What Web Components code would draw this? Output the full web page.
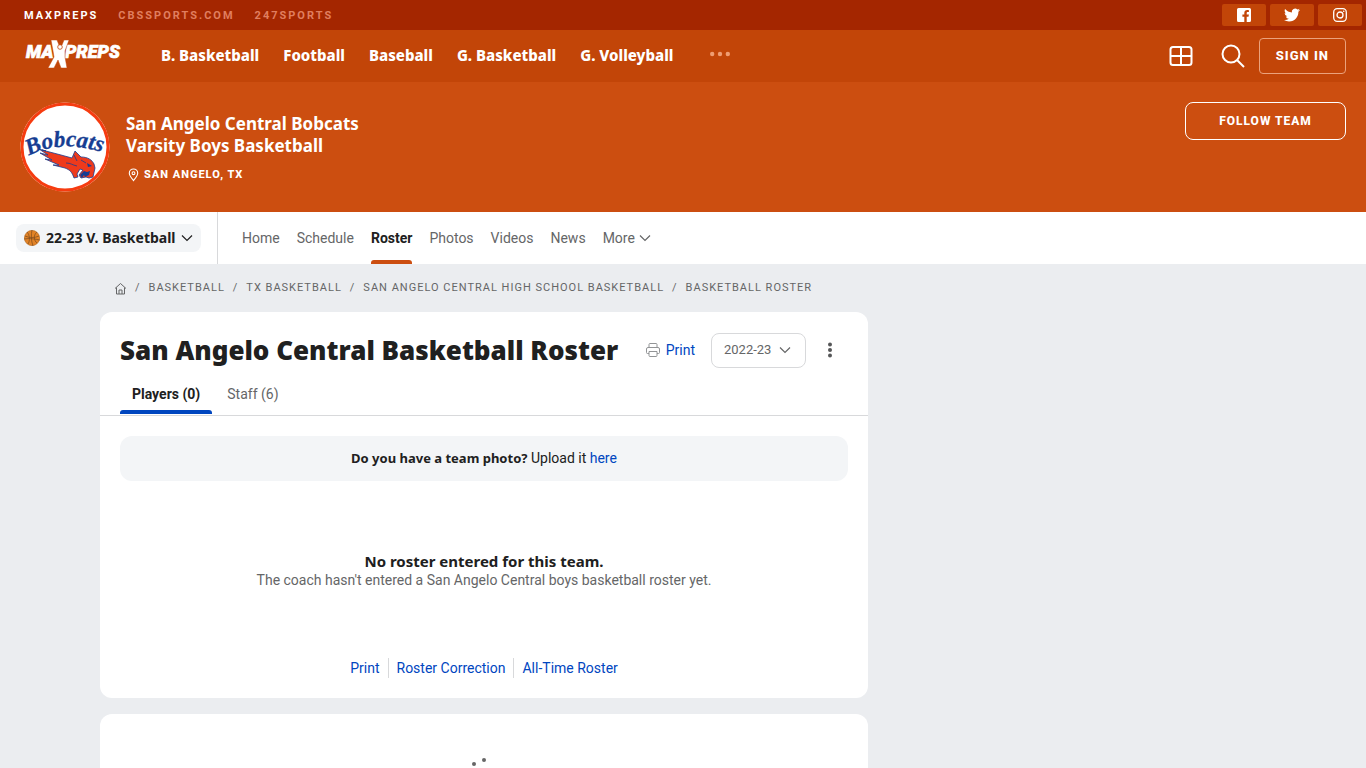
<!DOCTYPE html>
<html lang="en">
<head>
<meta charset="utf-8">
<meta name="viewport" content="width=device-width, initial-scale=1">
<title>San Angelo Central Basketball Roster</title>
<style>
  :root {
    --brand-dark: #a42600;
    --brand-nav: #c24508;
    --brand: #cc4e10;
    --page-bg: #ebedf0;
    --soft-bg: #f3f5f7;
    --line: #d8d9db;
    --text: #202020;
    --muted: #656667;
    --link: #0046bf;
    --heading-font: "Noto Sans", Roboto, sans-serif;
  }
  body {
    margin: 0;
    background: var(--page-bg);
    color: var(--text);
    font: 14px/20px Roboto, "Noto Sans", sans-serif;
  }
  .layout {
    display: grid;
    grid-template-columns: minmax(0, 768px) minmax(0, 300px);
    justify-content: space-between;
    max-width: 1166px;
    margin: 0 auto;
  }
  main {
    display: grid;
    gap: 16px;
  }
</style>
</head>
<body>
<network-bar></network-bar>
<site-nav></site-nav>
<team-header location="San Angelo, TX">
  <span slot="name">San Angelo Central Bobcats</span>
  <span slot="squad">Varsity Boys Basketball</span>
</team-header>
<team-tabs season="22-23 V. Basketball" items="Home, Schedule, Roster, Photos, Videos, News" active="Roster"></team-tabs>
<div class="layout">
  <div>
    <bread-crumbs items="Basketball, TX Basketball, San Angelo Central High School Basketball, Basketball Roster"></bread-crumbs>
    <main>
      <page-card>
        <roster-header year="2022-23">San Angelo Central Basketball Roster</roster-header>
        <roster-empty>
          <span slot="title">No roster entered for this team.</span>
          <span slot="text">The coach hasn't entered a San Angelo Central boys basketball roster yet.</span>
        </roster-empty>
      </page-card>
      <page-card>
        <loading-dots></loading-dots>
      </page-card>
    </main>
  </div>
</div>

<script>
const chevron = `
  <svg class="chevron" width="12" height="12" viewBox="0 0 12 12" fill="none" stroke="currentColor" stroke-width="1.2" aria-hidden="true">
    <path d="M1 3.500l5 5 5-5"/>
  </svg>
`

const reset = `
  :host, * { box-sizing: border-box; }
  a { color: inherit; text-decoration: none; }
  button, select { font: inherit; color: inherit; background: none; border: 0; padding: 0; margin: 0; cursor: pointer; }
  svg { display: block; flex: none; }
`

class BaseElement extends HTMLElement {
  connectedCallback () {
    this.attachShadow({ mode: 'open' })
    const template = document.createElement('template')
    template.innerHTML = `<style>${reset}${this.getStyle()}</style>${this.getMarkup()}`
    this.shadowRoot.appendChild(template.content.cloneNode(true))
  }

  getList (name) {
    return this.getAttribute(name).split(',').map(item => item.trim())
  }
}

class NetworkBar extends BaseElement {
  getStyle () {
    return `
      :host {
        display: flex;
        justify-content: space-between;
        align-items: center;
        height: 30px;
        padding: 0 4px 0 24px;
        background: var(--brand-dark);
        color: #fff;
      }
      nav { display: flex; gap: 20px; padding-top: 1px; font-size: 11px; font-weight: 700; letter-spacing: 2px; }
      nav a { color: #e07e5f; }
      nav a.current { color: #fff; }
      .social { display: flex; gap: 4px; }
      .social a {
        display: grid;
        place-items: center;
        width: 44px;
        height: 22px;
        border-radius: 2px;
        background: var(--brand-nav);
      }
    `
  }

  getMarkup () {
    return `
      <nav aria-label="Network">
        <a class="current" href="#">MAXPREPS</a>
        <a href="#">CBSSPORTS.COM</a>
        <a href="#">247SPORTS</a>
      </nav>
      <div class="social">
        <a href="#" aria-label="Facebook">
          <svg width="14" height="14" viewBox="0 0 14 14">
            <path fill="#fff" d="M1.5 0h11A1.500 1.500 0 0 1 14 1.500v11a1.500 1.500 0 0 1-1.500 1.500H9.700V8.700h1.800l.4-2.200H9.700V5.200c0-.8.4-1.100 1.100-1.100h1.100V2.200c-.4-.1-1-.1-1.600-.1-1.900 0-3 1.100-3 3v1.400H5.400v2.200h1.900V14H1.500A1.500 1.500 0 0 1 0 12.500v-11A1.500 1.500 0 0 1 1.500 0z"/>
          </svg>
        </a>
        <a href="#" aria-label="Twitter">
          <svg width="16" height="16" viewBox="0 0 24 24">
            <path fill="#fff" d="M23.950 4.570a10 10 0 0 1-2.820.77 4.960 4.960 0 0 0 2.160-2.720c-.95.550-2 .950-3.130 1.180a4.920 4.920 0 0 0-8.380 4.480C7.690 8.090 4.070 6.130 1.640 3.160a4.820 4.820 0 0 0-.67 2.480c0 1.710.87 3.210 2.190 4.100a4.900 4.900 0 0 1-2.230-.62v.06a4.920 4.920 0 0 0 3.950 4.830 5 5 0 0 1-2.210.08 4.940 4.940 0 0 0 4.600 3.420A9.870 9.870 0 0 1 0 19.540a13.990 13.990 0 0 0 7.550 2.210c9.050 0 14-7.500 14-13.980 0-.21 0-.42-.02-.63a9.940 9.940 0 0 0 2.460-2.550z"/>
          </svg>
        </a>
        <a href="#" aria-label="Instagram">
          <svg width="14" height="14" viewBox="0 0 14 14" fill="none" stroke="#fff" stroke-width="1.300">
            <rect x=".7" y=".7" width="12.600" height="12.600" rx="3.500"/>
            <circle cx="7" cy="7" r="3"/>
            <circle cx="10.700" cy="3.300" r=".8" fill="#fff" stroke="none"/>
          </svg>
        </a>
      </div>
    `
  }
}

class SiteNav extends BaseElement {
  getStyle () {
    return `
      :host {
        display: flex;
        align-items: center;
        height: 52px;
        padding: 0 20px 0 24px;
        background: var(--brand-nav);
        color: #fff;
      }
      nav { display: flex; gap: 24px; margin: 0 37px; padding-bottom: 2px; font-family: var(--heading-font); font-size: 15px; font-weight: 800; }
      .actions { display: flex; align-items: center; margin-left: auto; gap: 14px; }
      .actions > a { padding-right: 14px; }
      .sign-in {
        height: 36px;
        padding: 0 16px;
        border: 1px solid #eba27c;
        border-radius: 4px;
        font-size: 13px;
        font-weight: 800;
        letter-spacing: 1px;
      }
    `
  }

  getMarkup () {
    const sports = ['B. Basketball', 'Football', 'Baseball', 'G. Basketball', 'G. Volleyball']

    return `
      <a href="#" aria-label="MaxPreps home">
        <svg width="100" height="32" viewBox="0 0 100 32" fill="#fff">
          <g font-family="Roboto, sans-serif" font-weight="900" font-style="italic" font-size="18" stroke="#fff" stroke-width=".7">
            <text x="2" y="18">MA</text>
            <text x="41" y="18">PREPS</text>
          </g>
          <path d="M27 0h6l2 5h3l2-5h5l-4 11v6l2 11h-6l-3-8-4 8h-6l6-11-1-6z" stroke="#c24508" stroke-width=".5"/>
          <circle cx="36" cy="7" r="2.300" stroke="#c24508" stroke-width=".8"/>
        </svg>
      </a>
      <nav aria-label="Sports">
        ${sports.map(sport => `<a href="#">${sport}</a>`).join('')}
      </nav>
      <button aria-label="More sports">
        <svg width="20" height="20" viewBox="0 0 20 20" fill="#ef9d72">
          <circle cx="2.200" cy="8" r="2.200"/><circle cx="10" cy="8" r="2.200"/><circle cx="17.800" cy="8" r="2.200"/>
        </svg>
      </button>
      <div class="actions">
        <a href="#" aria-label="Scores">
          <svg width="24" height="24" viewBox="0 0 24 24" fill="none" stroke="#fff" stroke-width="2">
            <rect x="1.500" y="3" width="21" height="18" rx="2.500"/>
            <path d="M12 3v18M1.500 12h21"/>
          </svg>
        </a>
        <button aria-label="Search">
          <svg width="24" height="24" viewBox="0 0 24 24" fill="none" stroke="#fff" stroke-width="2">
            <circle cx="10" cy="10" r="8.500"/>
            <path d="M16 16l7 7"/>
          </svg>
        </button>
        <button class="sign-in">SIGN IN</button>
      </div>
    `
  }
}

class TeamHeader extends BaseElement {
  getStyle () {
    return `
      :host {
        display: flex;
        align-items: flex-start;
        gap: 16px;
        min-height: 130px;
        padding: 20px;
        background: var(--brand);
        color: #fff;
      }
      .team { padding-top: 11px; }
      h2 { margin: 0; font-family: var(--heading-font); font-size: 17px; line-height: 22px; font-weight: 700; }
      h2 ::slotted(span) { display: block; }
      .location {
        display: flex;
        align-items: center;
        gap: 4px;
        margin-top: 8px;
        font-size: 11px;
        font-weight: 800;
        letter-spacing: 1px;
        text-transform: uppercase;
      }
      .follow {
        width: 161px;
        height: 38px;
        margin-left: auto;
        border: 1px solid #fff;
        border-radius: 8px;
        font-size: 12px;
        font-weight: 800;
        letter-spacing: 1px;
      }
    `
  }

  getMarkup () {
    return `
      <svg width="90" height="90" viewBox="0 0 90 90" role="img" aria-label="Bobcats mascot">
        <circle cx="45" cy="45" r="44.500" fill="#fff"/>
        <circle cx="45" cy="45" r="43" fill="#fff" stroke="#f63c10" stroke-width="3"/>
        <path d="M22 48l19 5 11 3 3-7 6 6c7 0 11 3 13 7l1 4-2 9-4 1-3-1-5 1-2-3 4-5-3-1-3 5 1 3-4 1c-2-6-4-8-9-10l-12-3 6 0-14-6 7 1-12-7 8 2-9-6 7 2z" fill="#ee3a1c" stroke="#173d92" stroke-width=".8" stroke-linejoin="round"/>
        <path d="M60 73l4-4 3 1 3-1-1 4-4 2-1-2-2 3zM67 61l5 3-4 1z" fill="#173d92"/>
        <path d="M46 61c5 0 6 2 11 3M54 53l3 6M61 58l5 3" fill="none" stroke="#173d92" stroke-width=".8"/>
        <path id="arc" d="M9 54Q40 36 88 52" fill="none"/>
        <text font-family="Liberation Serif, serif" font-size="23" font-weight="700" font-style="italic" fill="#173d92" stroke="#173d92" stroke-width=".3">
          <textPath href="#arc">Bobcats</textPath>
        </text>
      </svg>
      <div class="team">
        <h2><slot name="name"></slot><slot name="squad"></slot></h2>
        <div class="location">
          <svg width="14" height="14" viewBox="0 0 14 14" fill="none" stroke="#fff" stroke-width="1.100">
            <path d="M7.500 12.600C5 9.500 3.300 7.500 3.300 5.200a4.200 4.200 0 0 1 8.400 0c0 2.300-1.700 4.300-4.200 7.400z"/>
            <circle cx="7.500" cy="5.200" r="1.400"/>
          </svg>
          <span>${this.getAttribute('location')}</span>
        </div>
      </div>
      <button class="follow">FOLLOW TEAM</button>
    `
  }
}

class TeamTabs extends BaseElement {
  getStyle () {
    return `
      :host { display: flex; height: 52px; background: #fff; color: var(--muted); }
      .season { display: flex; align-items: center; padding: 0 16px; border-right: 1px solid var(--line); }
      label {
        display: flex;
        align-items: center;
        height: 28px;
        padding: 0 8px;
        border-radius: 8px;
        background: var(--soft-bg);
        color: var(--text);
      }
      select { appearance: none; margin: 0 -12px 0 6px; padding-right: 17px; font-family: var(--heading-font); font-weight: 700; }
      .chevron { pointer-events: none; }
      nav { display: flex; gap: 17px; padding: 0 24px; }
      nav a {
        display: flex;
        align-items: center;
        gap: 4px;
      }
      nav a.active { position: relative; color: var(--text); font-weight: 700; }
      nav a.active::after {
        content: "";
        position: absolute;
        inset: auto 0 0;
        height: 4px;
        border-radius: 3px 3px 0 0;
        background: var(--brand);
      }
    `
  }

  getMarkup () {
    const active = this.getAttribute('active')

    return `
      <div class="season">
        <label>
          <svg width="16" height="16" viewBox="0 0 16 16" fill="none" stroke="#7a4a20" stroke-width=".7" aria-hidden="true">
            <circle cx="8" cy="8" r="7.600" fill="#e28327" stroke="#b86a20"/>
            <path d="M1 6c4 2 10 2 14 0M8 0c-1 4-1 11 1 16M3 2c3 3 3 9 1 12M13 2c-4 3-3 9 0 11M0 9c5-1 11 0 16 1"/>
          </svg>
          <select aria-label="Season"><option>${this.getAttribute('season')}</option></select>
          ${chevron}
        </label>
      </div>
      <nav aria-label="Team">
        ${this.getList('items').map(item => `<a href="#"${item === active ? ' class="active"' : ''}>${item}</a>`).join('')}
        <a href="#">More ${chevron}</a>
      </nav>
    `
  }
}

class BreadCrumbs extends BaseElement {
  getStyle () {
    return `
      :host { display: block; padding: 14px; color: var(--muted); font-size: 11px; letter-spacing: 1px; text-transform: uppercase; }
      ol { display: flex; gap: 8px; margin: 0; padding: 0; list-style: none; white-space: nowrap; }
      li { display: flex; align-items: center; gap: 8px; }
      li + li::before { content: "/"; }
    `
  }

  getMarkup () {
    return `
      <nav aria-label="Breadcrumb">
        <ol>
          <li>
            <a href="#" aria-label="Home">
              <svg width="13" height="13" viewBox="0 0 13 13" fill="none" stroke="currentColor">
                <path d="M1 6.500l5.500-5 5.500 5M2.500 5.500V12h8V5.500M5 12V8h3v4"/>
              </svg>
            </a>
          </li>
          ${this.getList('items').map(item => `<li><a href="#">${item}</a></li>`).join('')}
        </ol>
      </nav>
    `
  }
}

class PageCard extends BaseElement {
  getStyle () {
    return `
      :host { display: block; border-radius: 12px; background: #fff; }
    `
  }

  getMarkup () {
    return `<slot></slot>`
  }
}

class RosterHeader extends BaseElement {
  getStyle () {
    return `
      :host { display: block; padding-top: 20px; border-bottom: 1px solid var(--line); }
      .title { display: flex; align-items: center; padding: 0 28px 0 20px; }
      h1 { margin: 0 auto 0 0; font-family: var(--heading-font); font-size: 26px; line-height: 36px; font-weight: 900; white-space: nowrap; }
      .print { display: flex; align-items: center; gap: 6px; margin-right: 16px; color: var(--link); }
      .year { display: flex; align-items: center; color: var(--muted); font-size: 13px; }
      select {
        appearance: none;
        width: 95px;
        height: 35px;
        margin-right: -27px;
        padding: 0 12px;
        border: 1px solid var(--line);
        border-radius: 8px;
      }
      .chevron { margin-right: 15px; pointer-events: none; }
      .menu { margin-left: 14px; }
      .tabs { display: flex; gap: 3px; padding: 0 20px; margin-top: 8px; }
      .tabs button { height: 39px; padding: 0 12px 4px; color: var(--muted); }
      .tabs button.active { position: relative; color: var(--text); font-weight: 700; }
      .tabs button.active::after {
        content: "";
        position: absolute;
        inset: auto 0 1px;
        height: 4px;
        border-radius: 3px 3px 0 0;
        background: var(--link);
      }
    `
  }

  getMarkup () {
    return `
      <div class="title">
        <h1><slot></slot></h1>
        <a class="print" href="#">
          <svg width="14" height="14" viewBox="0 0 14 14" fill="none" stroke="#929496">
            <path d="M3 5V1.500Q3 .5 4 .5h6q1 0 1 1V5M3 10.500H1.500q-1 0-1-1V6q0-1.500 1.500-1.500h10q1.500 0 1.500 1.500v3.500q0 1-1 1H11M3 8.500h8v4q0 1-1 1H4q-1 0-1-1z"/>
          </svg>
          Print
        </a>
        <label class="year">
          <select aria-label="Year"><option>${this.getAttribute('year')}</option></select>
          ${chevron}
        </label>
        <button class="menu" aria-label="More options">
          <svg width="20" height="20" viewBox="0 0 20 20" fill="#555657">
            <circle cx="10" cy="4.500" r="2"/><circle cx="10" cy="10" r="2"/><circle cx="10" cy="15.500" r="2"/>
          </svg>
        </button>
      </div>
      <div class="tabs">
        <button class="active">Players (0)</button>
        <button>Staff (6)</button>
      </div>
    `
  }
}

class RosterEmpty extends BaseElement {
  getStyle () {
    return `
      :host { display: block; padding: 20px; text-align: center; }
      .photo { margin: 0; padding: 13px; border-radius: 12px; background: var(--soft-bg); line-height: 19px; }
      b { font-family: var(--heading-font); font-size: 13px; }
      .link { color: var(--link); }
      .message { padding: 71px 0 68px; color: var(--muted); line-height: 19px; }
      h2 { margin: 0; color: var(--text); font-family: var(--heading-font); font-size: 15px; line-height: 19px; font-weight: 700; }
      p { margin: 0; }
      .links { display: flex; justify-content: center; color: var(--link); }
      .links a { padding: 0 8px; }
      .links a + a { border-left: 1px solid var(--line); }
    `
  }

  getMarkup () {
    return `
      <p class="photo"><b>Do you have a team photo?</b> Upload it <a class="link" href="#">here</a></p>
      <div class="message">
        <h2><slot name="title"></slot></h2>
        <p><slot name="text"></slot></p>
      </div>
      <div class="links">
        <a href="#">Print</a>
        <a href="#">Roster Correction</a>
        <a href="#">All-Time Roster</a>
      </div>
    `
  }
}

class LoadingDots extends BaseElement {
  getStyle () {
    return `
      :host { display: grid; justify-content: center; padding: 40px 0; }
    `
  }

  getMarkup () {
    return `
      <svg width="40" height="40" viewBox="0 0 40 40" fill="#666" role="img" aria-label="Loading">
        <circle cx="20" cy="6" r="2"/>
        <circle cx="10" cy="10" r="2"/>
        <circle cx="6" cy="20" r="2"/>
        <circle cx="10" cy="30" r="2"/>
      </svg>
    `
  }
}

window.customElements.define('network-bar', NetworkBar)
window.customElements.define('site-nav', SiteNav)
window.customElements.define('team-header', TeamHeader)
window.customElements.define('team-tabs', TeamTabs)
window.customElements.define('bread-crumbs', BreadCrumbs)
window.customElements.define('page-card', PageCard)
window.customElements.define('roster-header', RosterHeader)
window.customElements.define('roster-empty', RosterEmpty)
window.customElements.define('loading-dots', LoadingDots)
</script>
</body>
</html>
